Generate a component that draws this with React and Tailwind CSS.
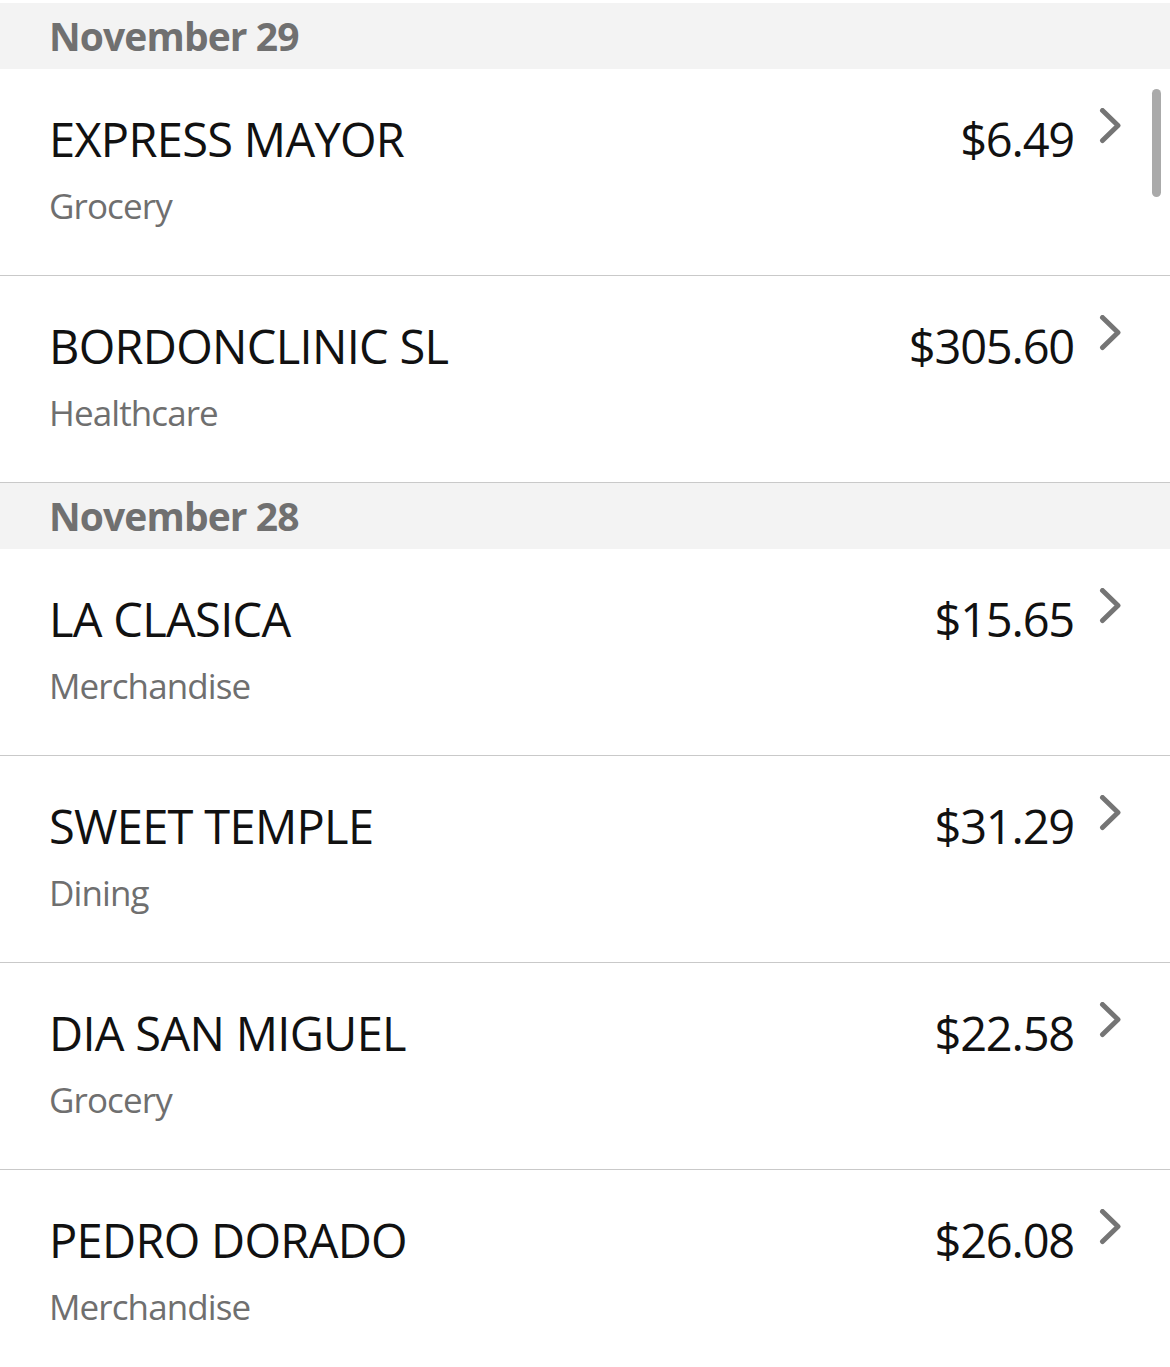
const groups = [
  {
    date: "November 29",
    items: [
      { name: "EXPRESS MAYOR", cat: "Grocery", amt: "$6.49" },
      { name: "BORDONCLINIC SL", cat: "Healthcare", amt: "$305.60" },
    ],
  },
  {
    date: "November 28",
    items: [
      { name: "LA CLASICA", cat: "Merchandise", amt: "$15.65" },
      { name: "SWEET TEMPLE", cat: "Dining", amt: "$31.29" },
      { name: "DIA SAN MIGUEL", cat: "Grocery", amt: "$22.58" },
      { name: "PEDRO DORADO", cat: "Merchandise", amt: "$26.08" },
    ],
  },
];

function Chevron() {
  return (
    <svg width="26" height="38" viewBox="0 0 26 38" className="shrink-0">
      <path d="M4.5 2.5 L20 17.5 L4.5 32.5" fill="none" stroke="#757575" strokeWidth="5" strokeLinecap="round" strokeLinejoin="round" />
    </svg>
  );
}

function Row({ item }) {
  return (
    <div className="flex h-[207px] pl-[49px] pr-[46px] bg-white border-b border-[#c9c9c9]">
      <div className="flex flex-col flex-1 pt-[40px]">
        <div className="text-[47px] leading-[60px] text-[#111111] tracking-[-0.7px]">{item.name}</div>
        <div className="text-[35px] leading-[48px] text-[#6f6f6f] mt-[13px] tracking-[-0.9px]">{item.cat}</div>
      </div>
      <div className="flex items-start pt-[40px]">
        <div className="text-[47px] leading-[60px] text-[#111111] tracking-[-1.2px]">{item.amt}</div>
        <div className="ml-[24px] -mt-[1px]">
          <Chevron />
        </div>
      </div>
    </div>
  );
}

export default function App() {
  return (
    <div className="relative w-[1170px] h-[1367px] overflow-hidden bg-white pt-[3px]" style={{ fontFamily: '"Open Sans", "Noto Sans", sans-serif' }}>
      {groups.map((g) => (
        <div key={g.date}>
          <div className="h-[66px] bg-[#f3f3f3] pl-[49px] flex items-center">
            <span className="text-[39px] font-bold text-[#707070] leading-[50px] tracking-[-0.9px]">{g.date}</span>
          </div>
          {g.items.map((it) => (
            <Row key={it.name} item={it} />
          ))}
        </div>
      ))}
      <div className="absolute left-[1152px] top-[89px] w-[9px] h-[108px] rounded-full bg-[#aaaaaa]" />
    </div>
  );
}
